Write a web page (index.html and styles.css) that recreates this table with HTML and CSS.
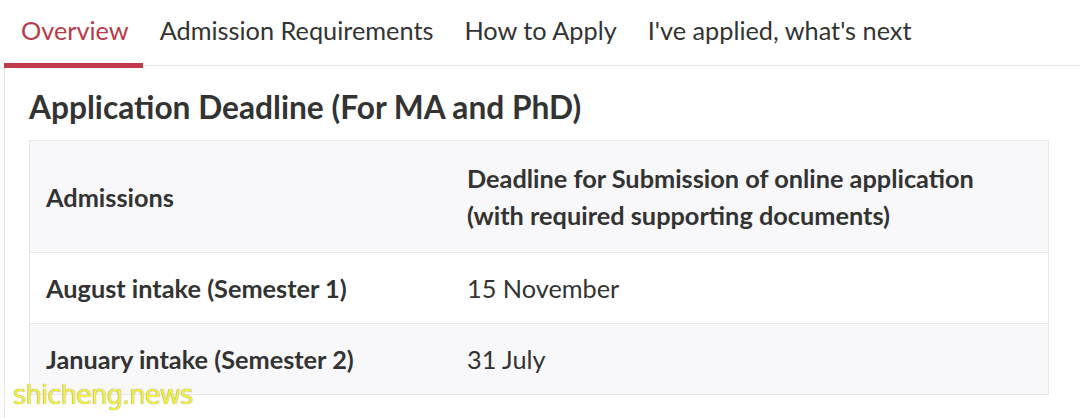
FILE: index.html
```html
<!DOCTYPE html>
<html lang="en">
<head>
    <meta charset="UTF-8">
    <meta name="viewport" content="width=device-width, initial-scale=1.0">
    <title>Application Deadline</title>
    <link rel="stylesheet" href="styles.css">
</head>
<body>
    <ul class="tabs">
        <li class="tab active">Overview</li>
        <li class="tab">Admission Requirements</li>
        <li class="tab">How to Apply</li>
        <li class="tab">I've applied, what's next</li>
    </ul>

    <div class="panel">
        <h2>Application Deadline (For MA and PhD)</h2>
        <table class="deadlines">
            <tr class="head">
                <th>Admissions</th>
                <th>Deadline for Submission of online application<br>(with required supporting documents)</th>
            </tr>
            <tr>
                <th>August intake (Semester 1)</th>
                <td>15 November</td>
            </tr>
            <tr class="shade">
                <th>January intake (Semester 2)</th>
                <td>31 July</td>
            </tr>
        </table>
    </div>

    <div class="watermark">shicheng.news</div>
</body>
</html>
```

FILE: styles.css
```css
body {
    margin: 0;
    padding: 0 0 0 4px;
    font-family: Lato, "Open Sans", sans-serif;
    color: #333;
    background: #fff;
    overflow: hidden;
}

/* Tabs */
.tabs {
    list-style: none;
    margin: 0;
    padding: 0;
    display: flex;
    border-bottom: 1px solid #e3e3e3;
    height: 65px;
}

.tab {
    padding: 12px 14px 0 17px;
    font-size: 25.3px;
    line-height: 36px;
    color: #333;
    height: 53px;
}

.tab.active {
    color: #b83b4c;
    border-bottom: 5px solid #c1394c;
    height: 51px;
}

/* Content */
.panel {
    border-left: 1px solid #e6e6e6;
    padding: 20px 30px 0 24px;
    height: calc(100vh - 86px);
}

.panel h2 {
    margin: 0 0 12px;
    font-size: 31.7px;
    line-height: 42px;
    font-weight: 700;
    color: #333;
}

.deadlines {
    width: 1020px;
    border-collapse: collapse;
    border: 1px solid #e8e8ea;
    font-size: 25.3px;
}

.deadlines th,
.deadlines td {
    text-align: left;
    vertical-align: middle;
    padding: 17px 17px 17px 16px;
    line-height: 36px;
    border-bottom: 1px solid #e8e8ea;
}

.deadlines th {
    font-weight: 700;
    width: 388px;
}

.deadlines td {
    font-weight: 400;
}

.deadlines .head {
    background: #f8f7f9;
}

.deadlines .head th {
    padding-top: 19px;
    padding-bottom: 18px;
    line-height: 37px;
}

.deadlines .head th:last-child {
    width: auto;
}

.deadlines .shade {
    background: #f8f7f9;
}

.watermark {
    position: absolute;
    left: 13px;
    top: 380px;
    font-family: "DejaVu Sans", sans-serif;
    font-size: 26px;
    letter-spacing: -1px;
    color: #f3ef3a;
    text-shadow: 0 0 1px #777;
}
```
